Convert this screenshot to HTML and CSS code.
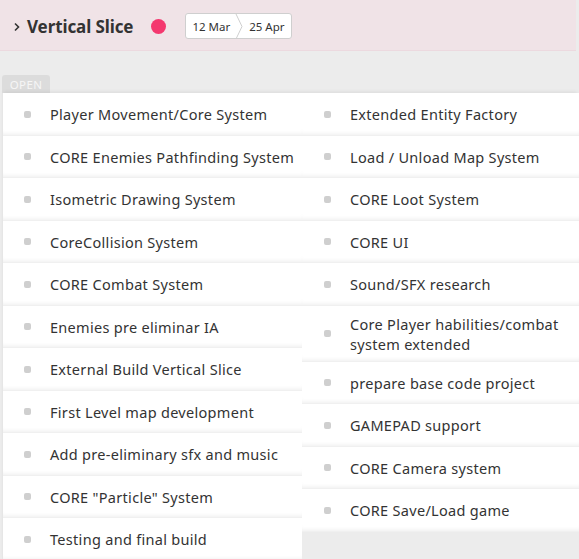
FILE: index.html
```html
<!DOCTYPE html>
<html>
<head>
<meta charset="utf-8">
<link rel="stylesheet" href="styles.css">
</head>
<body>
<header class="bar">
  <svg class="chev" width="8" height="10" viewBox="0 0 8 10"><path d="M2 1.5 L5.5 5 L2 8.5" fill="none" stroke="#333" stroke-width="1.6"/></svg>
  <h1 class="title">Vertical Slice</h1>
  <span class="dot"></span>
  <div class="dates">
    <span class="date">12 Mar</span>
    <svg class="sep" width="8" height="25" viewBox="0 0 8 25"><path d="M1 0 L7 12.5 L1 25" fill="none" stroke="#cfcfcf" stroke-width="1"/></svg>
    <span class="date">25 Apr</span>
  </div>
</header>
<main class="board">
  <div class="tab">OPEN</div>
  <div class="cols">
    <ul class="col col-left">
      <li class="card"><span class="bullet"></span><span class="label">Player Movement/Core System</span></li>
      <li class="card"><span class="bullet"></span><span class="label">CORE Enemies Pathfinding System</span></li>
      <li class="card"><span class="bullet"></span><span class="label">Isometric Drawing System</span></li>
      <li class="card"><span class="bullet"></span><span class="label">CoreCollision System</span></li>
      <li class="card"><span class="bullet"></span><span class="label">CORE Combat System</span></li>
      <li class="card"><span class="bullet"></span><span class="label">Enemies pre eliminar IA</span></li>
      <li class="card"><span class="bullet"></span><span class="label">External Build Vertical Slice</span></li>
      <li class="card"><span class="bullet"></span><span class="label">First Level map development</span></li>
      <li class="card"><span class="bullet"></span><span class="label">Add pre-eliminary sfx and music</span></li>
      <li class="card"><span class="bullet"></span><span class="label">CORE "Particle" System</span></li>
      <li class="card"><span class="bullet"></span><span class="label">Testing and final build</span></li>
    </ul>
    <ul class="col col-right">
      <li class="card"><span class="bullet"></span><span class="label">Extended Entity Factory</span></li>
      <li class="card"><span class="bullet"></span><span class="label">Load / Unload Map System</span></li>
      <li class="card"><span class="bullet"></span><span class="label">CORE Loot System</span></li>
      <li class="card"><span class="bullet"></span><span class="label">CORE UI</span></li>
      <li class="card"><span class="bullet"></span><span class="label">Sound/SFX research</span></li>
      <li class="card"><span class="bullet"></span><span class="label">Core Player habilities/combat system extended</span></li>
      <li class="card"><span class="bullet"></span><span class="label">prepare base code project</span></li>
      <li class="card"><span class="bullet"></span><span class="label">GAMEPAD support</span></li>
      <li class="card"><span class="bullet"></span><span class="label">CORE Camera system</span></li>
      <li class="card"><span class="bullet"></span><span class="label">CORE Save/Load game</span></li>
    </ul>
  </div>
</main>
</body>
</html>
```
FILE: styles.css
```css
* { box-sizing: border-box; }
html, body { margin: 0; padding: 0; }
body {
  background: #ececec;
  font-family: "Noto Sans", "DejaVu Sans", sans-serif;
  color: #333;
  width: 579px;
  height: 559px;
  overflow: hidden;
}
.bar {
  width: 576px;
  height: 51px;
  background: #f0e3e7;
  border-bottom: 1px solid #ecd9df;
  display: flex;
  align-items: center;
  padding: 2px 0 0 13px;
}
.chev { margin-top: 1px; }
.title {
  margin: 0 0 0 6px;
  font-size: 17px;
  font-weight: 700;
  color: #333;
  letter-spacing: -0.1px;
}
.dot {
  width: 15px;
  height: 15px;
  border-radius: 50%;
  background: #f4386f;
  margin-left: 18px;
}
.dates {
  margin-left: 19px;
  height: 26px;
  display: flex;
  align-items: center;
  background: #fff;
  border: 1px solid #cfcfcf;
  border-radius: 3px;
  padding: 0 6px 0 6px;
  font-size: 11.5px;
  color: #333;
}
.sep { margin: 0 6px 0 5px; }
.board {
  padding-top: 24px;
}
.tab {
  margin-left: 2px;
  width: 48px;
  height: 18px;
  background: #dcdcdc;
  color: #f6f6f6;
  font-size: 11.5px;
  border-radius: 3px 3px 0 0;
  display: flex;
  align-items: center;
  justify-content: center;
  letter-spacing: 0.4px;
}
.cols {
  display: flex;
  align-items: flex-start;
  margin-left: 2px;
  box-shadow: 0 -3px 4px -2px rgba(0,0,0,0.08);
}
.col {
  list-style: none;
  margin: 0;
  padding: 0;
  display: flex;
  flex-direction: column;
}
.col-left {
  width: 300px;
  border-left: 1px solid #e6e6e6;
}
.col-right {
  width: 277px;
}
.card {
  background: #fff;
  min-height: 42.5px;
  display: flex;
  align-items: center;
  padding: 8px 0 7px 21px;
  box-shadow: inset 0 -4px 4px -3px rgba(0,0,0,0.07);
  border-bottom: 1px solid #f0f0f0;
}
.col-right .card { padding-left: 22px; }
.bullet {
  flex: 0 0 7px;
  width: 7px;
  height: 7px;
  border-radius: 2px;
  background: #cfcfcf;
  margin-right: 19px;
}
.label {
  font-size: 14.5px;
  letter-spacing: 0.3px;
  line-height: 20px;
  color: #333;
}
```
